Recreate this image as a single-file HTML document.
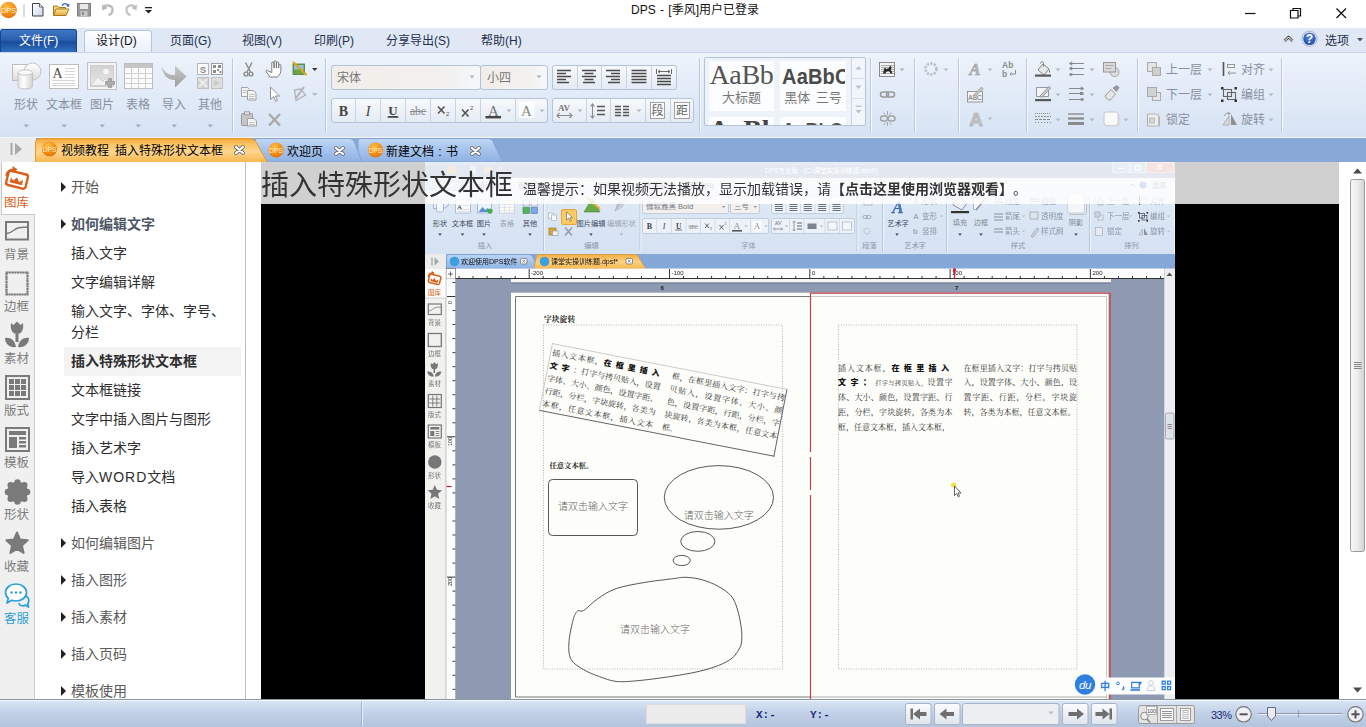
<!DOCTYPE html>
<html lang="zh-CN">
<head>
<meta charset="utf-8">
<title>DPS - [季风]用户已登录</title>
<style>
*{box-sizing:border-box;margin:0;padding:0}
html,body{width:1366px;height:727px;overflow:hidden;background:#fff}
body{font-family:"Liberation Sans","Noto Sans CJK SC",sans-serif;font-size:13px;color:#222;position:relative}
.abs{position:absolute}
#titlebar{position:absolute;left:0;top:0;width:1366px;height:28px;background:#fff}
#title{position:absolute;left:0;width:1390px;top:0.500px;text-align:center;font-size:12px;word-spacing:1px;color:#111;line-height:18px}
#menubar{position:absolute;left:0;top:28px;width:1366px;height:24px;background:#e0e8f5}
#menubar .m{position:absolute;top:4px;font-size:12px;line-height:18px;color:#1e2f4d;white-space:nowrap}
#filetab{position:absolute;left:0;top:1px;width:77px;height:23px;border-radius:3px 3px 0 0;background:linear-gradient(#3f78c4,#2a5fb0 45%,#1b4c9c 55%,#2f6fc0);border:1px solid #1a4488;border-bottom:none}
#designtab{position:absolute;left:84px;top:2px;width:68px;height:23px;border-radius:4px 4px 0 0;background:linear-gradient(#fdfeff,#e9f0fa);border:1px solid #b4c6df;border-bottom:none}
#ribbon{position:absolute;left:0;top:52px;width:1366px;height:86px;border-bottom:1px solid #f2f6fb;background:linear-gradient(#edf3fb,#e3ecf8 40%,#d7e3f4);border-top:1px solid #c9d6ea}
#tabbar{position:absolute;left:0;top:138px;width:1366px;height:24px;background:#88a9d7}
#leftstrip{position:absolute;left:0;top:162px;width:35px;height:537px;background:#f0f0f0;border-right:1px solid #c9c9c9}
#panel{position:absolute;left:35px;top:162px;width:211px;height:537px;background:#fff;border-right:1px solid #bdbdbd}
#video{position:absolute;left:261px;top:162px;width:1078px;height:537px;background:#000;overflow:hidden}
#vscroll{position:absolute;left:1350px;top:162px;width:16px;height:537px;background:#fff}
#status{position:absolute;left:0;top:699px;width:1366px;height:28px;background:linear-gradient(#dbe6f5,#c3d2e8 45%,#b3c4dc);border-top:1px solid #8797ab}

.rl{position:absolute;font-size:12px;line-height:16px;color:#8790a0;white-space:nowrap;text-align:center}
.sep{position:absolute;top:58px;width:2px;height:75px;border-left:1px solid #b9c9e0;border-right:1px solid #f6f9fd}
.box{position:absolute;border:1px solid #b3c3da;border-radius:3px;background:linear-gradient(#f7f9fc,#e4ebf5)}
.bt{position:absolute;font-size:12px;line-height:16px;color:#777;white-space:nowrap}
.tabt{font-size:12px;line-height:16px;color:#000;white-space:nowrap;font-family:"Liberation Sans","Noto Sans CJK SC",sans-serif}
.sl{position:absolute;left:0;width:33px;text-align:center;font-size:12.500px;line-height:16px;white-space:nowrap}
.ni{position:absolute;left:36px;font-size:14px;line-height:20px;white-space:nowrap}
#panel{overflow:hidden}

.pt{position:absolute;font-family:"Liberation Serif","Noto Serif CJK SC",serif;font-size:8px;color:#333;white-space:nowrap}
.pt .l{display:block;text-align:justify;text-align-last:justify;white-space:nowrap}
.pt b{font-family:"Liberation Sans","Noto Sans CJK SC",sans-serif;font-weight:900;color:#111}
.pt small{font-size:6px}
#vhead{position:absolute;left:0;top:0;width:1078px;height:42px;background:rgba(255,255,255,0.815)}
#vh1{position:absolute;left:0;top:6px;font-size:28px;line-height:36px;color:#333;white-space:nowrap;letter-spacing:0}
#vh2{position:absolute;left:262px;top:17px;text-spacing-trim:space-all;font-size:14px;line-height:20px;color:#333;white-space:nowrap}
.stx{position:absolute;top:7px;font-family:"Liberation Mono","DejaVu Sans Mono",monospace;font-size:11px;line-height:16px;font-weight:bold;color:#1a2a7a;white-space:nowrap}
</style>
</head>
<body>
<div id="titlebar">

  <svg class="abs" style="left:0;top:0" width="160" height="28" viewBox="0 0 160 28">
    <defs>
      <radialGradient id="gDps" cx="0.4" cy="0.3" r="0.8"><stop offset="0" stop-color="#ffc24a"/><stop offset="0.6" stop-color="#f28a12"/><stop offset="1" stop-color="#dd6a05"/></radialGradient>
      <linearGradient id="gFold" x1="0" y1="0" x2="0" y2="1"><stop offset="0" stop-color="#fbe7a0"/><stop offset="1" stop-color="#e3aa3a"/></linearGradient>
      <linearGradient id="gDoc" x1="0" y1="0" x2="1" y2="1"><stop offset="0" stop-color="#ffffff"/><stop offset="1" stop-color="#cfd8e6"/></linearGradient>
    </defs>
    <circle cx="8.5" cy="10" r="8.3" fill="url(#gDps)"/>
    <text x="8.6" y="13" font-size="7.5" fill="#fff3d8" text-anchor="middle" font-family="Liberation Sans, sans-serif">DPS</text>
    <rect x="23.5" y="4" width="1" height="13" fill="#b8b8b8"/>
    <path d="M32.5 3.5h7l3.5 3.5v9h-10.5z" fill="url(#gDoc)" stroke="#3c4350" stroke-width="1"/>
    <path d="M39.5 3.5v3.5h3.5" fill="#e8edf5" stroke="#3c4350" stroke-width="0.8"/>
    <path d="M53.5 15.5v-9.5h4l1.5 1.5h6.5v2" fill="#f3d27a" stroke="#a97a1e" stroke-width="1"/>
    <path d="M53.5 15.500l2.500-6.500h13l-3 6.500z" fill="url(#gFold)" stroke="#a97a1e" stroke-width="1"/>
    <path d="M62 5.500c2-2.500 5-2.500 6 0" fill="none" stroke="#3a63b8" stroke-width="1.300"/>
    <path d="M69.500 3.500l-0.500 3.500-3-1z" fill="#3a63b8"/>
    <rect x="77.500" y="3.500" width="13" height="12.500" fill="#9a9a9a" stroke="#7d7d7d"/>
    <rect x="80" y="4" width="8" height="5" fill="#e9e9e9"/>
    <rect x="80.500" y="11" width="7" height="5" fill="#c9c9c9"/>
    <rect x="82" y="12" width="2" height="3" fill="#8a8a8a"/>
    <path d="M104 6.500c5-2.500 9 0 8.500 4-0.300 2.500-2 4-4 4.500" fill="none" stroke="#b9b9b9" stroke-width="2.200"/>
    <path d="M102 4.500l0.500 6 5-2.500z" fill="#b4b4b4"/>
    <path d="M135 6.500c-5-2.500-9 0-8.500 4 0.300 2.500 2 4 4 4.500" fill="none" stroke="#c4c4c4" stroke-width="2.200"/>
    <path d="M137 4.500l-0.500 6-5-2.500z" fill="#bfbfbf"/>
    <rect x="145" y="7" width="7" height="1.300" fill="#222"/>
    <path d="M145 10h7l-3.500 3.500z" fill="#222"/>
  </svg>
  <svg class="abs" style="left:1236px;top:0" width="130" height="28" viewBox="0 0 130 28">
    <path d="M9 13.500h10.500" stroke="#111" stroke-width="1.200"/>
    <path d="M54.500 10.500h7.500v7.500h-7.500z M57 10.500v-2h7.500v7.500h-2.500" fill="none" stroke="#111" stroke-width="1.200"/>
    <path d="M100.500 8.500l9.500 9.500M110 8.500l-9.500 9.500" stroke="#111" stroke-width="1.300"/>
  </svg>
  <div id="title">DPS - [季风]用户已登录</div>
</div>
<div id="menubar">
  <div id="filetab"></div>
  <div id="designtab"></div>
  <div class="m" style="left:19px;color:#fff">文件(F)</div>
  <div class="m" style="left:96px;color:#111">设计(D)</div>
  <div class="m" style="left:170px">页面(G)</div>
  <div class="m" style="left:242px">视图(V)</div>
  <div class="m" style="left:314px">印刷(P)</div>
  <div class="m" style="left:386px">分享导出(S)</div>
  <div class="m" style="left:481px">帮助(H)</div>
  <div class="m" style="left:1325px;color:#1e2f4d">选项</div>
  <svg class="abs" style="left:1276px;top:0" width="90" height="24" viewBox="0 0 90 24">
    <defs><radialGradient id="gHelp" cx="0.5" cy="0.3" r="0.8"><stop offset="0" stop-color="#5b8be0"/><stop offset="1" stop-color="#173f9c"/></radialGradient></defs>
    <path d="M8.500 13l4-4 4 4" fill="none" stroke="#555" stroke-width="2.600" stroke-linejoin="round"/>
    <path d="M8.500 13l4-4 4 4" fill="none" stroke="#fff" stroke-width="1" stroke-linejoin="round"/>
    <circle cx="33.500" cy="10.800" r="7.600" fill="#eef2f9" stroke="#8b9fc4" stroke-width="0.800"/>
    <circle cx="33.500" cy="10.800" r="6.300" fill="url(#gHelp)"/>
    <text x="33.500" y="15.200" font-size="12" font-weight="bold" fill="#fff" text-anchor="middle" font-family="Liberation Sans, sans-serif">?</text>
    <path d="M81 10h6l-3 3.500z" fill="#4a5566"/>
  </svg>

</div>
<div id="ribbon"></div>
<div id="ribbonc">
  <div class="rl" style="left:8px;top:97px;width:36px">形状</div>
  <div class="rl" style="left:44px;top:97px;width:40px">文本框</div>
  <div class="rl" style="left:84px;top:97px;width:36px">图片</div>
  <div class="rl" style="left:120px;top:97px;width:36px">表格</div>
  <div class="rl" style="left:156px;top:97px;width:36px">导入</div>
  <div class="rl" style="left:192px;top:97px;width:36px">其他</div>
  <div class="sep" style="left:232px"></div>
  <div class="sep" style="left:325px"></div>
  <div class="sep" style="left:699px"></div>
  <div class="sep" style="left:870px"></div>
  <div class="sep" style="left:914px"></div>
  <div class="sep" style="left:958px"></div>
  <div class="sep" style="left:1026px"></div>
  <div class="sep" style="left:1137px"></div>
  <div class="sep" style="left:1281px"></div>
  <div class="box" style="left:331px;top:65px;width:150px;height:25px;background:linear-gradient(90deg,#f1ede9,#f3f1ef 80%,#f4f7fb)"></div>
  <div class="box" style="left:480px;top:65px;width:68px;height:25px;background:linear-gradient(90deg,#f1ede9,#f3f1ef 70%,#f4f7fb)"></div>
  <div class="bt" style="left:337px;top:70px">宋体</div>
  <div class="bt" style="left:487px;top:70px">小四</div>
  <div class="box" style="left:552px;top:65px;width:125px;height:25px"></div>
  <div class="box" style="left:331px;top:98px;width:217px;height:25px"></div>
  <div class="box" style="left:552px;top:98px;width:142px;height:25px"></div>
  <div class="box" style="left:704px;top:57px;width:162px;height:69px;border-radius:2px;background:#eef3fa;overflow:hidden">
    <div class="abs" style="left:4px;top:3px;width:65px;height:50px;background:#fcfdfe"></div>
    <div class="abs" style="left:75px;top:3px;width:66px;height:50px;background:#fcfdfe"></div>
    <div class="abs" style="left:4px;top:0px;width:65px;text-align:center;font-family:'Liberation Serif','Noto Serif CJK SC',serif;font-size:28px;line-height:34px;color:#555;letter-spacing:-0.3px">AaBb</div>
    <div class="abs" style="left:4px;top:32px;width:65px;text-align:center;font-size:13px;line-height:16px;color:#777">大标题</div>
    <div class="abs" style="left:77px;top:2px;width:63px;overflow:hidden;white-space:nowrap;font-family:'Liberation Sans','Noto Sans CJK SC',sans-serif;font-weight:bold;font-size:20px;line-height:32px;color:#4a4a4a;letter-spacing:0.2px;transform:scaleY(1.12);transform-origin:0 50%">AaBbCc</div>
    <div class="abs" style="left:75px;top:32px;width:66px;text-align:center;font-size:13px;line-height:16px;color:#777;word-spacing:2px">黑体 三号</div>
    <div class="abs" style="left:4px;top:59px;width:65px;height:10px;background:#fcfdfe"></div>
    <div class="abs" style="left:75px;top:59px;width:66px;height:10px;background:#fcfdfe"></div>
    <div class="abs" style="left:4px;top:55px;width:65px;text-align:center;font-family:'Liberation Serif',serif;font-weight:bold;font-size:28px;line-height:34px;color:#444">AaBb</div>
    <div class="abs" style="left:77px;top:58.500px;width:63px;overflow:hidden;white-space:nowrap;font-weight:bold;font-size:18px;line-height:26px;color:#555;letter-spacing:0.2px">AaBbCcDd</div>
    <div class="abs" style="left:146px;top:0;width:15px;height:67px;background:#f2f6fb;border-left:1px solid #c9d5e6"></div>
  </div>
  <div class="rl" style="left:1166px;top:62px;text-align:left">上一层</div>
  <div class="rl" style="left:1166px;top:87px;text-align:left">下一层</div>
  <div class="rl" style="left:1166px;top:112px;text-align:left">锁定</div>
  <div class="rl" style="left:1241px;top:62px;text-align:left">对齐</div>
  <div class="rl" style="left:1241px;top:87px;text-align:left">编组</div>
  <div class="rl" style="left:1241px;top:112px;text-align:left">旋转</div>
  <svg class="abs" style="left:0;top:52px" width="1366" height="85" viewBox="0 52 1366 85" id="ribsvg">
  <defs>
  <linearGradient id="gW" x1="0" y1="0" x2="0" y2="1"><stop offset="0" stop-color="#ffffff"/><stop offset="1" stop-color="#dcdcdc"/></linearGradient>
  <linearGradient id="gCyl" x1="0" y1="0" x2="1" y2="0"><stop offset="0" stop-color="#e2e2e2"/><stop offset="0.4" stop-color="#ffffff"/><stop offset="1" stop-color="#d2d2d2"/></linearGradient>
  <linearGradient id="gGr" x1="0" y1="0" x2="0" y2="1"><stop offset="0" stop-color="#c9c9c9"/><stop offset="1" stop-color="#9d9d9d"/></linearGradient>
  <linearGradient id="gPic" x1="0" y1="0" x2="0" y2="1"><stop offset="0" stop-color="#d2d2d2"/><stop offset="1" stop-color="#e9e9e9"/></linearGradient>
</defs>
<!-- dropdown arrows under big buttons -->
<g fill="#a3abba">
  <path d="M23.500 124.500h5.500l-2.750 3z"/><path d="M61.500 124.500h5.500l-2.750 3z"/><path d="M99.500 124.500h5.500l-2.750 3z"/>
  <path d="M135.500 124.500h5.500l-2.750 3z"/><path d="M171.500 124.500h5.500l-2.750 3z"/><path d="M207.500 124.500h5.500l-2.750 3z"/>
</g>
<!-- shapes icon -->
<rect x="12.500" y="64.500" width="16" height="16" fill="url(#gW)" stroke="#bdbdbd"/>
<circle cx="32.500" cy="71.500" r="8.500" fill="url(#gW)" stroke="#c2c2c2"/>
<path d="M18 72.500v14c0 3.200 14.500 3.200 14.500 0v-14z" fill="url(#gCyl)" stroke="#c4c4c4"/>
<ellipse cx="25.250" cy="72.500" rx="7.250" ry="2.600" fill="#fafafa" stroke="#c8c8c8"/>
<!-- textbox icon -->
<rect x="49.500" y="64.500" width="29" height="24" fill="#fdfdfd" stroke="#bcbcbc"/>
<text x="52.500" y="78" font-family="Liberation Serif, serif" font-size="14" fill="#4c4c4c">A</text>
<g stroke="#d6d6d6" stroke-width="1"><path d="M65 68.500h10M65 71.500h10M65 74.500h10M65 77.500h10M52 80.500h23M52 83.500h23M52 85.500h23"/></g>
<!-- picture icon -->
<rect x="87.500" y="62.500" width="29" height="27" fill="#f4f4f4" stroke="#c2c2c2"/>
<rect x="90.500" y="65.500" width="23" height="21" fill="url(#gPic)" stroke="#cdcdcd"/>
<circle cx="106" cy="71.500" r="2.800" fill="#f6f6f6"/>
<path d="M91 85.500l7-9 4.500 5 3-3 5 7z" fill="#f1f1f1" stroke="#bdbdbd" stroke-width="0.600"/>
<path d="M108.500 78.500h3v3h3v3h-3v3h-3v-3h-3v-3h3z" fill="#adadad" stroke="#8d8d8d" stroke-width="0.700"/>
<!-- table icon -->
<rect x="124.500" y="63.500" width="28" height="25" fill="#fcfcfc" stroke="#bdbdbd"/>
<rect x="125" y="64" width="27" height="4" fill="#c6c6c6"/>
<g stroke="#cfcfcf" stroke-width="1"><path d="M131.500 68v20M138.500 68v20M145.500 68v20M125 73.500h27M125 78.500h27M125 83.500h27"/></g>
<!-- import arrow -->
<path d="M161.500 66c2 6 8 9.500 13.500 9v-9.500l11.500 11-11.500 11v-7.500c-7 0.500-12.500-5-13.500-14z" fill="url(#gGr)"/>
<!-- others icon -->
<rect x="197.500" y="63.500" width="11" height="11" fill="#fafafa" stroke="#b5b5b5"/>
<text x="203" y="73" font-size="9" font-family="Liberation Sans, sans-serif" font-weight="bold" fill="#8a8a8a" text-anchor="middle">S</text>
<rect x="211.500" y="63.500" width="11" height="11" fill="#fcfcfc" stroke="#9e9e9e"/>
<g fill="#8d8d8d"><rect x="213" y="65" width="3" height="3"/><rect x="218" y="65" width="3" height="3"/><rect x="213" y="70" width="3" height="3"/><rect x="217" y="69" width="2" height="2"/><rect x="219.500" y="71" width="2" height="2"/></g>
<rect x="197.500" y="77.500" width="11" height="11" fill="#d2d2d2" stroke="#bdbdbd"/>
<path d="M199 79l8 8M207 79l-8 8" stroke="#ececec" stroke-width="2.200"/>
<rect x="211.500" y="77.500" width="11" height="11" fill="#dedede" stroke="#c2c2c2"/>
<path d="M214 80l6 3-6 3z" fill="#c8c8c8"/>
<!-- scissors -->
<g stroke="#8b8b8b" stroke-width="1.400" fill="none"><path d="M245.500 62.500l5 9.500M252 62.500l-5 9.500"/><circle cx="246" cy="74" r="1.900"/><circle cx="251" cy="74" r="1.900"/></g>
<!-- hand -->
<path d="M268 71c-1.200-1.600-2.600-0.600-1.600 1l3.400 5h7.500c2.500-2 3.600-4.500 3.600-7v-4.500c0-1.500-2.200-1.500-2.200 0v2.500v-5c0-1.500-2.300-1.500-2.300 0v5v-6c0-1.500-2.300-1.500-2.300 0v6v-5c0-1.500-2.300-1.500-2.300 0v9.500z" fill="#fff" stroke="#6f6f6f" stroke-width="0.900" stroke-linejoin="round"/>
<!-- picture edit -->
<rect x="293" y="64" width="11.500" height="10.500" fill="#6aa54a" stroke="#4f7b3c" stroke-width="0.800"/>
<rect x="294" y="65" width="9.500" height="4.500" fill="#8fc0ea"/>
<path d="M293 62l13.500 13" stroke="#d9a520" stroke-width="2.400"/>
<path d="M312 68h5.500l-2.750 3z" fill="#333"/>
<!-- copy -->
<g fill="#f3f3f3" stroke="#9a9a9a" stroke-width="0.900"><path d="M241.500 87.500h6l2 2v7h-8z"/><path d="M247.500 90.500h6l2.500 2.500v7h-8.500z"/></g>
<g stroke="#b5b5b5" stroke-width="0.800"><path d="M249 94.500h5.500M249 96.500h5.500M249 98.500h5.500M243 90.500h3.500M243 92.500h3.500"/></g>
<!-- pointer -->
<path d="M270.500 87v12.500l3-2.800 2 4.600 1.900-0.800-2-4.500h4.100z" fill="#fff" stroke="#8a8a8a" stroke-width="0.900" stroke-linejoin="round"/>
<!-- edit shape -->
<g stroke="#b3b3b3" stroke-width="1.300" fill="none"><path d="M294.500 90l1.500 10.500 9.500-5.500-5-6z"/><path d="M304 87l-8 11" stroke-width="2"/></g>
<path d="M312 93h5.500l-2.750 3z" fill="#b5bcc8"/>
<!-- paste -->
<rect x="241.500" y="113.500" width="11" height="12" rx="1" fill="#c6c6c6" stroke="#909090" stroke-width="0.900"/>
<rect x="244.500" y="111.800" width="5" height="3" fill="#e4e4e4" stroke="#909090" stroke-width="0.800"/>
<path d="M247.500 118.500h6.500l2.500 2.500v5h-9z" fill="#f3f3f3" stroke="#9a9a9a" stroke-width="0.900"/>
<path d="M249 122.500h6M249 124.500h6" stroke="#b8b8b8" stroke-width="0.800"/>
<!-- delete X -->
<path d="M269 114l11 11.500M280 114l-11 11.500" stroke="#a8a8a8" stroke-width="2.400"/>

<!-- combobox arrows -->
<g fill="#a9b1bf"><path d="M469.500 75.500h5l-2.500 2.800z"/><path d="M536.500 75.500h5l-2.500 2.800z"/></g>
<path d="M480.500 66v23" stroke="#b3c3da"/>
<!-- align group dividers -->
<g stroke="#c7d3e5" stroke-width="1"><path d="M577.500 66v23M601.500 66v23M626.500 66v23M651.500 66v23"/>
<path d="M355.500 99v23M380.500 99v23M405.500 99v23M430.500 99v23M455.500 99v23M480.500 99v23M515.500 99v23"/>
<path d="M586.500 99v23M610.500 99v23M645.500 99v23M670.500 99v23"/></g>
<!-- align icons -->
<g stroke="#4a4a4a" stroke-width="1.300">
 <path d="M557 70.500h14M557 73.500h9M557 76.500h14M557 79.500h9M557 82.500h12"/>
 <path d="M582 70.500h14M584.500 73.500h9M582 76.500h14M584.500 79.500h9M583 82.500h12"/>
 <path d="M606 70.500h14M611 73.500h9M606 76.500h14M611 79.500h9M608 82.500h12"/>
 <path d="M631.500 70.500h15M631.500 73.500h15M631.500 76.500h15M631.500 79.500h15M631.500 82.500h15"/>
 <path d="M657 75.500h14M657 78.500h14M657 81.500h14M657 84.500h14"/>
</g>
<g stroke="#6a6a6a" stroke-width="1" fill="none"><path d="M656.500 69v5M671.500 69v5M658 71.500h12M660 70l-2 1.500 2 1.500M668 70l2 1.500-2 1.500"/></g>
<!-- B I U abc x2 x2 A A -->
<g font-family="Liberation Serif, serif" fill="#444">
 <text x="343.500" y="116" font-size="14" font-weight="bold" text-anchor="middle">B</text>
 <text x="368" y="116" font-size="14" font-style="italic" text-anchor="middle">I</text>
 <text x="393" y="115" font-size="13" font-weight="bold" text-anchor="middle" text-decoration="underline">U</text>
 <text x="418" y="115" font-size="11.500" text-anchor="middle" fill="#8a8a8a">abc</text>
 <text x="493.500" y="116" font-size="15" text-anchor="middle" fill="#7a7a7a">A</text>
 <text x="526.500" y="116" font-size="15" text-anchor="middle" fill="#8a8a8a">A</text>
</g>
<rect x="387.500" y="116.500" width="11" height="1.200" fill="#444"/>
<path d="M410 111.500h16.500" stroke="#8a8a8a" stroke-width="1"/>
<g stroke="#555" stroke-width="1.600"><path d="M438 106.500l6.500 7M444.500 106.500l-6.500 7"/><path d="M462 109.500l6.500 7M468.500 109.500l-6.500 7"/></g>
<text x="446" y="116" font-size="6" fill="#555" font-family="Liberation Sans, sans-serif">2</text>
<text x="470" y="110" font-size="6" fill="#555" font-family="Liberation Sans, sans-serif">2</text>
<rect x="485.500" y="116" width="15.500" height="2.400" fill="#444"/>
<rect x="519" y="102" width="15.500" height="16" fill="#fff" opacity="0.85"/>
<text x="526.500" y="116" font-size="15" text-anchor="middle" fill="#8a8a8a" font-family="Liberation Serif, serif">A</text>
<g fill="#b2b9c6"><path d="M506.500 109.500h5l-2.500 2.800z"/><path d="M539.500 109.500h5l-2.500 2.800z"/><path d="M577.500 109.500h5l-2.500 2.800z"/><path d="M636.500 109.500h5l-2.500 2.800z"/></g>
<!-- AV -->
<text x="564" y="110.500" font-size="9" font-weight="bold" text-anchor="middle" fill="#777" font-family="Liberation Serif, serif">AV</text>
<g stroke="#8a8a8a" stroke-width="1.100" fill="none"><path d="M557 115.500h15M559.500 113l-2.500 2.500 2.500 2.500M569.500 113l2.500 2.500-2.500 2.500"/></g>
<!-- line spacing -->
<g stroke="#8a8a8a" stroke-width="1.100" fill="none"><path d="M592.500 104v14M590.500 106.500l2-2.500 2 2.500M590.500 115.500l2 2.500 2-2.500"/></g>
<g stroke="#555" stroke-width="1.300"><path d="M597 106.500h8M597 110.500h8M597 114.500h8"/></g>
<!-- columns -->
<g stroke="#555" stroke-width="1.300"><path d="M615 106.500h6M615 109.500h6M615 112.500h6M615 115.500h6M623 106.500h6M623 109.500h6M623 112.500h6M623 115.500h6"/></g>
<!-- duan / ju -->
<rect x="650.500" y="102.500" width="14" height="16" fill="#fafbfd" stroke="#9a9a9a" stroke-width="0.900"/>
<rect x="674.500" y="102.500" width="15" height="16" fill="#fafbfd" stroke="#9a9a9a" stroke-width="0.900"/>
<text x="657.500" y="115" font-size="12" text-anchor="middle" fill="#666" font-family="Noto Sans CJK SC, sans-serif">段</text>
<text x="682" y="115" font-size="12" text-anchor="middle" fill="#666" font-family="Noto Sans CJK SC, sans-serif">距</text>
<!-- gallery scroll -->
<g fill="#b7bfcc"><path d="M855.500 69.500h6l-3-3.500z"/><path d="M855.500 85.500h6l-3 3.500z"/><path d="M855.500 110h6l-3 3.500z"/><rect x="855.500" y="105.500" width="6" height="1.300"/></g>
<path d="M852.500 78.500h13M852.500 98.500h13" stroke="#d5deeb"/>

<!-- text wrap icon -->
<rect x="879.500" y="62.500" width="15" height="14" fill="#f4f4f4" stroke="#808080" stroke-width="0.900"/>
<g stroke="#9a9a9a" stroke-width="0.800"><path d="M881 65.500h13M881 67.500h13M881 69.500h13M881 71.500h13M881 73.500h13"/></g>
<path d="M883 73.500l1.500-6 2 1.500 2.500-1 1-2.500 1.500 1.500-0.500 3 1.500 3.500h-2l-1.500-2.500-2.500 0.500-1 2z" fill="#2a2a2a"/>
<path d="M899.500 68.500h5l-2.500 2.800z" fill="#a9b1bf"/>
<!-- link -->
<g fill="none" stroke="#9a9a9a" stroke-width="1.500"><rect x="880.500" y="92" width="8" height="5" rx="2.500"/><rect x="886.500" y="92" width="8" height="5" rx="2.500"/></g>
<!-- broken link -->
<g fill="none" stroke="#a2a2a2" stroke-width="1.400"><rect x="880.500" y="116" width="7" height="5" rx="2.500"/><rect x="888" y="116" width="7" height="5" rx="2.500"/><path d="M887.500 111v4M887.500 122v4M883.500 112.500l2 2.500M891.500 112.500l-2 2.500M883.500 125l2-2.500M891.500 125l-2-2.500" stroke-width="0.900"/></g>
<!-- gear -->
<circle cx="931" cy="69" r="5.500" fill="none" stroke="#b9bec7" stroke-width="2.600" stroke-dasharray="2.200 1.300"/>
<path d="M943.500 68.500h5l-2.500 2.800z" fill="#b5bcc8"/>
<!-- art text A -->
<text x="975" y="75" font-size="17" font-style="italic" font-weight="bold" text-anchor="middle" fill="#b8b8b8" stroke="#8f8f8f" stroke-width="0.400" font-family="Liberation Serif, serif">A</text>
<path d="M987.500 68.500h5l-2.500 2.800z" fill="#b5bcc8"/>
<text x="1002" y="68" font-size="8.500" font-weight="bold" fill="#8d8d8d" font-family="Liberation Sans, sans-serif">Ab</text>
<text x="1002" y="76.500" font-size="8.500" font-weight="bold" fill="#8d8d8d" font-family="Liberation Sans, sans-serif">b</text>
<path d="M1015.500 70v4h-5.500M1011.500 72.500l-1.500 1.500 1.500 1.500" fill="none" stroke="#8d8d8d" stroke-width="1"/>
<!-- ABC edit -->
<rect x="967.500" y="91.500" width="15" height="10.500" fill="#f4f4f4" stroke="#8f8f8f" stroke-width="0.900"/>
<text x="975" y="100" font-size="6.500" text-anchor="middle" fill="#666" font-family="Liberation Sans, sans-serif">ABC</text>
<path d="M974 94.500l7.500-7.500 1.700 1.700-7.500 7.500z" fill="#c6c6c6" stroke="#909090" stroke-width="0.600"/>
<!-- 3D A -->
<text x="976" y="125.500" font-size="19" font-weight="bold" text-anchor="middle" fill="#c6c6c6" stroke="#9b9b9b" stroke-width="0.500" font-family="Liberation Sans, sans-serif">A</text>
<path d="M987.500 117.500h5l-2.500 2.800z" fill="#b5bcc8"/>
<!-- fill bucket -->
<path d="M1038 70l5-6 6 5-5 6z" fill="#e9e9e9" stroke="#777" stroke-width="0.900"/>
<path d="M1040.500 63.500c0-2.500 3-2.500 3 0v3" fill="none" stroke="#777" stroke-width="0.900"/>
<path d="M1049 69c1 2 1.500 3 0.700 4-0.800-1-0.900-2-0.700-4z" fill="#777"/>
<rect x="1035" y="74.500" width="16" height="2.200" fill="#5a5a5a"/>
<!-- pen -->
<path d="M1036.500 87.500h12v9h-12z" fill="#f0f3f8" stroke="#8d8d8d" stroke-width="0.900"/>
<path d="M1040 96l9-9.500 1.600 1.600-9 9.500z" fill="#cfcfcf" stroke="#777" stroke-width="0.700"/>
<rect x="1035" y="99" width="16" height="2.200" fill="#5a5a5a"/>
<!-- dotted lines -->
<g stroke="#8a8a8a" stroke-width="1"><path d="M1035 113.500h16" stroke-dasharray="1 1"/><path d="M1035 116.500h16" stroke-dasharray="2 1"/><path d="M1035 119.500h16" stroke-dasharray="3 1"/><path d="M1035 122.500h16" stroke-dasharray="1 2"/></g>
<!-- arrows icons -->
<g stroke="#8a8a8a" stroke-width="1" fill="#8a8a8a"><path d="M1071 63.500h13M1071 68.500h13M1071 74.500h13"/><path d="M1069 63.500l3-1.700v3.400zM1069 68.500l3-1.700v3.400z" stroke-width="0.500"/><path d="M1069 74.500l2-1.400 2 1.400-2 1.400z" stroke-width="0.500"/></g>
<g stroke="#8a8a8a" stroke-width="1" fill="#8a8a8a"><path d="M1069 88.500h13M1069 93.500h13M1069 99.500h13"/><path d="M1084 88.500l-3-1.700v3.400z" stroke-width="0.500"/><rect x="1080" y="92" width="3.500" height="3" stroke="none"/><path d="M1084 99.500l-2-1.400-2 1.400 2 1.400z" stroke-width="0.500"/></g>
<g stroke="#8a8a8a"><path d="M1068 114h16" stroke-width="1.400"/><path d="M1068 118.500h16" stroke-width="2.200"/><path d="M1068 123.500h16" stroke-width="3"/></g>
<g fill="#b0b8c5"><path d="M1055.500 68.500h5l-2.500 2.800z"/><path d="M1055.500 93.500h5l-2.500 2.800z"/><path d="M1055.500 118.500h5l-2.500 2.800z"/><path d="M1089.500 68.500h5l-2.500 2.800z"/><path d="M1089.500 93.500h5l-2.500 2.800z"/><path d="M1089.500 118.500h5l-2.500 2.800z"/><path d="M1123.500 118.500h5l-2.500 2.800z"/></g>
<!-- shadow icon -->
<circle cx="1114.500" cy="72" r="4.500" fill="#dedede" stroke="#9a9a9a" stroke-width="0.900"/>
<rect x="1103.500" y="62.500" width="12" height="9.500" fill="#d9d9d9" stroke="#8f8f8f" stroke-width="0.900"/>
<path d="M1105.500 65.500h8M1105.500 68.500h6" stroke="#a9a9a9" stroke-width="1"/>
<!-- brush -->
<path d="M1113 88l4-2.500 2 2-2.500 4z" fill="#9a9a9a" stroke="#777" stroke-width="0.600"/>
<path d="M1105 96l6-6.500 4.500 4.500-5 6c-2 0.500-4.500-1.500-5.500-4z" fill="#e6e6e6" stroke="#888" stroke-width="0.800"/>
<!-- white rounded rect -->
<rect x="1104" y="112" width="14" height="13.500" rx="2.500" fill="#f9f9f9" stroke="#c4c4c4" stroke-width="0.900"/>
<path d="M1106 126h11c1.200 0 2-0.800 2-2v-10" fill="none" stroke="#cfd3da" stroke-width="1"/>
<!-- layer icons -->
<g stroke="#a5a5a5" stroke-width="0.900"><rect x="1147.500" y="62.500" width="9" height="9" fill="#e4e4e4"/><rect x="1152.500" y="67.500" width="8" height="8" fill="#cfcfcf"/></g>
<g stroke="#a5a5a5" stroke-width="0.900"><rect x="1152.500" y="92.500" width="8" height="8" fill="#e6e6e6"/><rect x="1147.500" y="87.500" width="9" height="9" fill="#d2d2d2"/></g>
<path d="M1147.500 114h9l3 3v9h-12z" fill="#eeeeee" stroke="#a9a9a9" stroke-width="0.900"/>
<rect x="1149.500" y="118" width="5" height="5" fill="#d5d5d5" stroke="#a9a9a9" stroke-width="0.700"/>
<path d="M1158.500 113.500v12" stroke="#c2c2c2"/>
<g fill="#b0b8c5"><path d="M1207.500 68.500h5l-2.500 2.800z"/><path d="M1207.500 93.500h5l-2.500 2.800z"/><path d="M1268.500 68.500h5l-2.500 2.800z"/><path d="M1268.500 93.500h5l-2.500 2.800z"/><path d="M1268.500 118.500h5l-2.500 2.800z"/></g>
<!-- align icon -->
<path d="M1223.500 62v14" stroke="#555" stroke-width="1.600"/>
<rect x="1227.500" y="64.500" width="7" height="3" fill="#f3f3f3" stroke="#8a8a8a" stroke-width="0.900"/>
<path d="M1236 73h-8M1230 71l-2 2 2 2" fill="none" stroke="#8a8a8a" stroke-width="0.900"/>
<!-- group icon -->
<g fill="none" stroke="#666" stroke-width="1.100"><rect x="1223.500" y="89.500" width="8" height="7"/><rect x="1227.500" y="92.500" width="8" height="7"/></g>
<g fill="#333"><rect x="1221" y="87" width="2.500" height="2.500"/><rect x="1234.500" y="87" width="2.500" height="2.500"/><rect x="1221" y="99.500" width="2.500" height="2.500"/><rect x="1234.500" y="99.500" width="2.500" height="2.500"/></g>
<!-- rotate icon -->
<path d="M1229 125v-9l-6 9z" fill="#dcdcdc" stroke="#a3a3a3" stroke-width="0.800"/>
<path d="M1231 125v-11l6 11z" fill="#8f8f8f"/>
<path d="M1224.500 116c0.500-2.500 3-3.500 5-2.500M1228.500 112l1.500 1.500-2 1.500" fill="none" stroke="#8f8f8f" stroke-width="1"/>


  </svg>
</div>

<div id="tabbar"></div>
<svg class="abs" style="left:0;top:137px" width="520" height="25" viewBox="0 137 520 25">
  <defs>
    <linearGradient id="gTabA" x1="0" y1="0" x2="0" y2="1"><stop offset="0" stop-color="#f5a536"/><stop offset="0.25" stop-color="#fbc468"/><stop offset="0.55" stop-color="#fdd690"/><stop offset="1" stop-color="#f9b549"/></linearGradient>
    <linearGradient id="gTabI" x1="0" y1="0" x2="0" y2="1"><stop offset="0" stop-color="#c3d8f4"/><stop offset="0.4" stop-color="#a9c6ee"/><stop offset="1" stop-color="#8fb2e2"/></linearGradient>
    <radialGradient id="gDps2" cx="0.4" cy="0.3" r="0.8"><stop offset="0" stop-color="#ffc24a"/><stop offset="0.6" stop-color="#f28a12"/><stop offset="1" stop-color="#dd6a05"/></radialGradient>
  </defs>
  <rect x="0" y="138" width="36" height="24" fill="#ececec"/>
  <path d="M11.500 143v12" stroke="#a9a9a9" stroke-width="2"/>
  <path d="M15 143l7 6-7 6z" fill="#a9a9a9"/>
  <path d="M358 162V141c0-1.500 1-2.500 3-2.500h127c4 0 5.500 3 7 7.500l8 16z" fill="url(#gTabI)" stroke="#7fa2d4" stroke-width="1"/>
  <path d="M255 162V141c0-1.500 1-2.500 3-2.500h91c4 0 5.500 3 7 7.500l6 16z" fill="url(#gTabI)" stroke="#7fa2d4" stroke-width="1"/>
  <path d="M35.500 162.500V143c0-3 2-4.500 5-4.500h209c5 0 7 3.500 9.500 9l8.500 15z" fill="url(#gTabA)" stroke="#e09a2c" stroke-width="1"/>
  <g font-family="Liberation Sans, sans-serif" font-size="6.800" fill="#fff0cf" text-anchor="middle">
    <circle cx="49.500" cy="149" r="7.600" fill="url(#gDps2)"/><text x="49.600" y="151.500">DPS</text>
    <circle cx="276" cy="150" r="7.600" fill="url(#gDps2)"/><text x="276.100" y="152.500">DPS</text>
    <circle cx="375.500" cy="150" r="7.600" fill="url(#gDps2)"/><text x="375.600" y="152.500">DPS</text>
  </g>
  <g stroke="#707070" stroke-width="4" stroke-linecap="round"><path d="M236 147l7 6M243 147l-7 6"/><path d="M336 148l7 6M343 148l-7 6"/><path d="M472 148l7 6M479 148l-7 6"/></g>
  <g stroke="#fff" stroke-width="2.200" stroke-linecap="round"><path d="M236 147l7 6M243 147l-7 6"/><path d="M336 148l7 6M343 148l-7 6"/><path d="M472 148l7 6M479 148l-7 6"/></g>
</svg>
<div class="abs tabt" style="left:61px;top:143px;word-spacing:2.700px">视频教程 插入特殊形状文本框</div>
<div class="abs tabt" style="left:287px;top:143.500px">欢迎页</div>
<div class="abs tabt" style="left:386px;top:143.500px">新建文档<span style="display:inline-block;width:12px;text-align:center">:</span>书</div>

<div id="leftstrip">
  <div class="abs" style="left:1px;top:0;width:34px;height:53px;background:#fff;border-left:1px solid #c9c9c9;border-bottom:1px solid #c9c9c9"></div>
  <div class="sl" style="top:33px;color:#d2601a">图库</div>
  <div class="sl" style="top:85px;color:#7d7d7d">背景</div>
  <div class="sl" style="top:137px;color:#7d7d7d">边框</div>
  <div class="sl" style="top:189px;color:#7d7d7d">素材</div>
  <div class="sl" style="top:241px;color:#7d7d7d">版式</div>
  <div class="sl" style="top:293px;color:#7d7d7d">模板</div>
  <div class="sl" style="top:345px;color:#7d7d7d">形状</div>
  <div class="sl" style="top:397px;color:#7d7d7d">收藏</div>
  <div class="sl" style="top:449px;color:#2a9fd8">客服</div>
  <svg class="abs" style="left:0;top:0" width="36" height="537" viewBox="0 162 36 537">
    <!-- tuku -->
    <g transform="rotate(14 17 180)"><rect x="7" y="172.500" width="20" height="14.500" rx="2.500" fill="none" stroke="#d9601a" stroke-width="2.400"/>
    <path d="M10.500 184v-5l3 2.500 3-4 3 4 3.500-3v5.500z" fill="#d9601a"/></g>
    <path d="M6.500 176c0-4 3-6.500 7-6.500" fill="none" stroke="#d9601a" stroke-width="2.200"/>
    <path d="M12.500 166l5 3.500-5 3.500z" fill="#d9601a"/>
    <!-- beijing -->
    <rect x="6" y="222" width="22" height="17.500" fill="none" stroke="#7a7a7a" stroke-width="2"/>
    <path d="M7 233.500c6-1 7-4.500 11-5.500s6-0.500 9-1" fill="none" stroke="#7a7a7a" stroke-width="1.400"/>
    <!-- biankuang -->
    <rect x="6.500" y="272.500" width="21" height="22" fill="none" stroke="#7a7a7a" stroke-width="2.200" stroke-dasharray="2.200 0.400"/>
    <!-- sucai (tulip) -->
    <path d="M11 323l2.500 2 3.500-3.500 3.500 3.500 2.500-2c1 6-1 11-6 11s-7-5-6-11z" fill="#7a7a7a"/>
    <path d="M15.500 334h3v8h-3z" fill="#7a7a7a"/>
    <path d="M16 347c-6 1-11-3-11-9 5-1 10 2 11 9zM18 347c6 1 11-3 11-9-5-1-10 2-11 9z" fill="#7a7a7a"/>
    <!-- banshi -->
    <rect x="6" y="376" width="23" height="23" fill="none" stroke="#7a7a7a" stroke-width="2"/>
    <g fill="#7a7a7a"><rect x="9" y="379" width="5" height="5"/><rect x="15" y="379" width="5" height="5"/><rect x="21" y="379" width="5" height="5"/><rect x="9" y="385" width="5" height="5"/><rect x="15" y="385" width="5" height="5"/><rect x="21" y="385" width="5" height="5"/><rect x="9" y="391" width="5" height="5"/><rect x="15" y="391" width="5" height="5"/><rect x="21" y="391" width="5" height="5"/></g>
    <!-- muban -->
    <rect x="6" y="428" width="23" height="23" fill="none" stroke="#7a7a7a" stroke-width="2"/>
    <g fill="#7a7a7a"><rect x="9" y="431" width="17" height="4"/><rect x="9" y="437" width="8" height="11"/><rect x="19" y="437" width="7" height="2.500"/><rect x="19" y="441" width="7" height="2.500"/><rect x="19" y="445" width="7" height="2.500"/></g>
    <!-- xingzhuang -->
    <circle cx="17.500" cy="492" r="10.300" fill="#7a7a7a"/>
    <g fill="#7a7a7a"><circle cx="17.5" cy="482.4" r="3.200"/><circle cx="24.3" cy="485.2" r="3.200"/><circle cx="27.1" cy="492.0" r="3.200"/><circle cx="24.3" cy="498.8" r="3.200"/><circle cx="17.5" cy="501.6" r="3.200"/><circle cx="10.7" cy="498.8" r="3.200"/><circle cx="7.9" cy="492.0" r="3.200"/><circle cx="10.7" cy="485.2" r="3.200"/></g>
    <!-- shoucang -->
    <path d="M17.0 532.5L20.1 539.6L27.7 540.3L21.9 545.4L23.6 552.9L17.0 549.0L10.4 552.9L12.1 545.4L6.3 540.3L13.9 539.6z" fill="#7a7a7a" stroke="#7a7a7a" stroke-width="2" stroke-linejoin="round"/>
    <!-- kefu -->
    <path d="M19 603.500c1 3 5 2.500 6.500 1.500l3 2-0.700-3.500c2-2.500 1-6-1.800-7.500" fill="none" stroke="#2a9fd8" stroke-width="1.700" stroke-linejoin="round" stroke-linecap="round"/>
    <path d="M16 584c6 0 10.500 3.800 10.500 8.500S22 601 16 601c-1.500 0-3-0.300-4.300-0.700l-4.700 2.700 1.300-4.600c-1.800-1.500-2.800-3.600-2.800-5.900 0-4.700 4.500-8.500 10.500-8.500z" fill="#fff" stroke="#2a9fd8" stroke-width="1.700" stroke-linejoin="round"/>
    <g fill="#2a9fd8"><circle cx="11.500" cy="592.500" r="1.200"/><circle cx="16" cy="592.500" r="1.200"/><circle cx="20.500" cy="592.500" r="1.200"/></g>
  </svg>
</div>
<div id="panel">
  <div class="abs" style="left:29px;top:185px;width:177px;height:29px;background:#f3f3f3"></div>
  <div class="abs" style="left:26px;top:20px;width:0;height:0;border-left:5.500px solid #222;border-top:5.500px solid transparent;border-bottom:5.500px solid transparent;margin-top:-0.500px"></div>
  <div class="ni" style="top:15px;color:#5a5a5a;">开始</div>
  <div class="abs" style="left:26px;top:57px;width:0;height:0;border-left:5.500px solid #222;border-top:5.500px solid transparent;border-bottom:5.500px solid transparent;margin-top:-0.500px"></div>
  <div class="ni" style="top:52px;color:#4c5665;font-weight:bold;">如何编辑文字</div>
  <div class="ni" style="top:81px;color:#2e2e2e;">插入文字</div>
  <div class="ni" style="top:110px;color:#2e2e2e;">文字编辑详解</div>
  <div class="ni" style="top:139px;color:#2e2e2e;">输入文字、字体、字号、</div>
  <div class="ni" style="top:160px;color:#2e2e2e;">分栏</div>
  <div class="ni" style="top:189px;color:#2e2e2e;font-weight:bold;">插入特殊形状文本框</div>
  <div class="ni" style="top:218px;color:#2e2e2e;">文本框链接</div>
  <div class="ni" style="top:247px;color:#2e2e2e;">文字中插入图片与图形</div>
  <div class="ni" style="top:276px;color:#2e2e2e;">插入艺术字</div>
  <div class="ni" style="top:305px;color:#2e2e2e;">导入<span style="letter-spacing:1px">WORD</span>文档</div>
  <div class="ni" style="top:334px;color:#2e2e2e;">插入表格</div>
  <div class="abs" style="left:26px;top:376px;width:0;height:0;border-left:5.500px solid #222;border-top:5.500px solid transparent;border-bottom:5.500px solid transparent;margin-top:-0.500px"></div>
  <div class="ni" style="top:371px;color:#5a5a5a;">如何编辑图片</div>
  <div class="abs" style="left:26px;top:413px;width:0;height:0;border-left:5.500px solid #222;border-top:5.500px solid transparent;border-bottom:5.500px solid transparent;margin-top:-0.500px"></div>
  <div class="ni" style="top:408px;color:#5a5a5a;">插入图形</div>
  <div class="abs" style="left:26px;top:450px;width:0;height:0;border-left:5.500px solid #222;border-top:5.500px solid transparent;border-bottom:5.500px solid transparent;margin-top:-0.500px"></div>
  <div class="ni" style="top:445px;color:#5a5a5a;">插入素材</div>
  <div class="abs" style="left:26px;top:487px;width:0;height:0;border-left:5.500px solid #222;border-top:5.500px solid transparent;border-bottom:5.500px solid transparent;margin-top:-0.500px"></div>
  <div class="ni" style="top:482px;color:#5a5a5a;">插入页码</div>
  <div class="abs" style="left:26px;top:524px;width:0;height:0;border-left:5.500px solid #222;border-top:5.500px solid transparent;border-bottom:5.500px solid transparent;margin-top:-0.500px"></div>
  <div class="ni" style="top:519px;color:#5a5a5a;">模板使用</div>
</div>
<div id="video">
  <div id="vframe" class="abs" style="left:164px;top:0;width:750px;height:537px;overflow:hidden;background:#8d9ab1"><div class="abs" style="left:0;top:0;width:750px;height:537px;filter:blur(0.400px)">
<svg class="abs" style="left:0;top:0" width="750" height="537" viewBox="425 162 750 537">
<defs>
<linearGradient id="vRib" x1="0" y1="0" x2="0" y2="1"><stop offset="0" stop-color="#dfe9f6"/><stop offset="1" stop-color="#d5e2f2"/></linearGradient>
<linearGradient id="vTabA" x1="0" y1="0" x2="0" y2="1"><stop offset="0" stop-color="#f6ad42"/><stop offset="0.5" stop-color="#fcd182"/><stop offset="1" stop-color="#f9b950"/></linearGradient>
<linearGradient id="vTabI" x1="0" y1="0" x2="0" y2="1"><stop offset="0" stop-color="#bdd5f5"/><stop offset="1" stop-color="#8fb4e6"/></linearGradient>
<linearGradient id="vTit" x1="0" y1="0" x2="0" y2="1"><stop offset="0" stop-color="#86a2d0"/><stop offset="0.3" stop-color="#627cae"/><stop offset="1" stop-color="#7189b6"/></linearGradient>
</defs>
<rect x="425" y="162" width="750" height="16" fill="url(#vTit)"/>
<rect x="425" y="162" width="750" height="2" fill="#6f9fe0"/>
<text x="765" y="173" font-size="6.500" fill="#fff" font-family="Liberation Sans, Noto Sans CJK SC, sans-serif">DPS专业版 - [C:\课堂实操训练题.dpsf*]</text>
<rect x="1112.500" y="162.500" width="17" height="10" fill="#8aa0c8" stroke="#c0cde4" stroke-width="0.800"/><rect x="1130.500" y="162.500" width="15" height="10" fill="#8aa0c8" stroke="#c0cde4" stroke-width="0.800"/><rect x="1146.500" y="162.500" width="27" height="10" fill="#cc6a64" stroke="#e0b0b0" stroke-width="0.800"/>
<path d="M1118 168.500h6M1135.500 165.500h5v4.500h-5zM1157.500 164.500l4.500 5M1162 164.500l-4.500 5" stroke="#fff" stroke-width="1.200" fill="none"/>
<circle cx="452" cy="170" r="5" fill="#f0a030" opacity="0.7"/><rect x="470" y="166" width="6" height="8" fill="#fff" opacity="0.5"/><rect x="484" y="167" width="8" height="6" fill="#e8c050" opacity="0.6"/><rect x="498" y="166" width="7" height="8" fill="#aaa" opacity="0.5"/>
<rect x="425" y="178" width="750" height="13" fill="#dce6f5"/>
<rect x="425" y="178.500" width="42" height="12.500" fill="#a9bfe0"/>
<g font-size="7" fill="#334" font-family="Liberation Sans, Noto Sans CJK SC, sans-serif"><text x="436" y="187.500" fill="#fff">文件(F)</text><text x="478" y="187.500">设计(D)</text><text x="518" y="187.500">页面(G)</text><text x="558" y="187.500">视图(V)</text><text x="598" y="187.500">印刷(P)</text><text x="638" y="187.500">分享导出(S)</text><text x="690" y="187.500">帮助(H)</text><text x="1152" y="187.500" fill="#556">选项</text></g>
<circle cx="1143" cy="185" r="3.500" fill="#3b6cc4"/><path d="M1130 186.500l2.500-2.500 2.500 2.500" stroke="#667" fill="none"/>
<rect x="425" y="191" width="750" height="63" fill="url(#vRib)"/>
<rect x="1174" y="178" width="1" height="76" fill="#eef3fa"/>
<path d="M543.5 194v57" stroke="#b4c6de" stroke-width="1"/><path d="M544.5 194v57" stroke="#f0f5fb" stroke-width="1"/>
<path d="M640 194v57" stroke="#b4c6de" stroke-width="1"/><path d="M641 194v57" stroke="#f0f5fb" stroke-width="1"/>
<path d="M857 194v57" stroke="#b4c6de" stroke-width="1"/><path d="M858 194v57" stroke="#f0f5fb" stroke-width="1"/>
<path d="M882.5 194v57" stroke="#b4c6de" stroke-width="1"/><path d="M883.5 194v57" stroke="#f0f5fb" stroke-width="1"/>
<path d="M946.5 194v57" stroke="#b4c6de" stroke-width="1"/><path d="M947.5 194v57" stroke="#f0f5fb" stroke-width="1"/>
<path d="M1089.5 194v57" stroke="#b4c6de" stroke-width="1"/><path d="M1090.5 194v57" stroke="#f0f5fb" stroke-width="1"/>
<g transform="translate(0 3.500)">
<rect x="433.500" y="196" width="8" height="9" fill="#eef1f6" stroke="#8fa0b8" stroke-width="0.700"/><circle cx="444" cy="200" r="4.500" fill="#e3ebf6" stroke="#7b9acb" stroke-width="0.700"/><path d="M436.500 199v8c0 2 7 2 7 0v-8z" fill="#f4f7fb" stroke="#8fa0b8" stroke-width="0.700"/>
<rect x="455.500" y="196.500" width="15" height="13" fill="#fcfdff" stroke="#9aa8bd" stroke-width="0.700"/><text x="457" y="205" font-size="7" font-family="Liberation Serif, serif" fill="#223">A</text><path d="M463 200h6M463 202h6M457.500 206h12M457.500 207.800h12" stroke="#c3cad6" stroke-width="0.600"/>
<rect x="477.500" y="196.500" width="14" height="13" fill="#eaf2fb" stroke="#8aa0c0" stroke-width="0.700"/><path d="M478.500 208.500l4-5 3 3 2-2 3.500 4z" fill="#5a8ed0"/><circle cx="490" cy="207.500" r="2.600" fill="#3fae49"/>
<rect x="499.500" y="197" width="15" height="12.500" fill="#fbfbfb" stroke="#c3c8d0" stroke-width="0.700"/><path d="M500 201h14M500 204h14M500 207h14M504.500 201v8.500M509.500 201v8.500" stroke="#d5d8dd" stroke-width="0.600"/>
<rect x="523" y="196.500" width="6.500" height="6" fill="#e8edf5" stroke="#8796ad" stroke-width="0.600"/><rect x="531" y="196.500" width="6.500" height="6" fill="#e8edf5" stroke="#8796ad" stroke-width="0.600"/><rect x="523" y="204" width="6.500" height="6" fill="#58b05a" stroke="#3c8a44" stroke-width="0.600"/><rect x="531" y="204" width="6.500" height="6" fill="#7fa8e0" stroke="#4a78bc" stroke-width="0.600"/>
</g>
<g font-size="7.200" font-family="Liberation Sans, Noto Sans CJK SC, sans-serif" text-anchor="middle" fill="#3a4862"><text x="440" y="225.500">形状</text><text x="462.500" y="225.500">文本框</text><text x="484" y="225.500">图片</text><text x="507" y="225.500" fill="#9aa3b2">表格</text><text x="530" y="225.500">其他</text><text x="591" y="225.500">图片编辑</text><text x="621.500" y="225.500" fill="#9aa3b2">编辑形状</text><text x="898" y="225.500">艺术字</text><text x="960" y="225" fill="#7d8799">填充</text><text x="981" y="225" fill="#7d8799">边框</text><text x="1076" y="225" fill="#7d8799">阴影</text></g>
<g font-size="7.200" font-family="Liberation Sans, Noto Sans CJK SC, sans-serif" text-anchor="middle" fill="#8a96aa" font-size="7"><text x="485" y="248">插入</text><text x="591.500" y="248">编辑</text><text x="748.500" y="248">字体</text><text x="869.500" y="248">段落</text><text x="915" y="248">艺术字</text><text x="1018" y="248">样式</text><text x="1131.500" y="248">排列</text></g>
<g fill="#3a4558"><path d="M438.2 233.500h3.600l-1.800 2.200z"/><path d="M460.7 233.500h3.600l-1.800 2.200z"/><path d="M482.2 233.500h3.600l-1.800 2.200z"/><path d="M528.2 233.500h3.600l-1.800 2.200z"/><path d="M589.2 233.500h3.600l-1.800 2.200z"/><path d="M895.2 233.500h3.600l-1.800 2.200z"/><path d="M958.2 233.500h3.600l-1.800 2.200z"/><path d="M979.2 233.500h3.600l-1.800 2.200z"/><path d="M1074.2 233.500h3.600l-1.800 2.200z"/></g><path d="M619.700 233.500h3.600l-1.800 2.200z" fill="#a9b2c0"/>
<g>
<path d="M553 196l3 5M557 196l-3 5" stroke="#8a8f99" stroke-width="0.800"/><path d="M566 196c1-2 3-2 4 0l1 5h-6z" fill="#fff" stroke="#777" stroke-width="0.600"/>
<rect x="548.500" y="213" width="5" height="5.500" fill="#f2f4f8" stroke="#a2aab8" stroke-width="0.600"/><rect x="551.500" y="215" width="5" height="5.500" fill="#f7f8fb" stroke="#a2aab8" stroke-width="0.600"/>
<rect x="561.500" y="209.500" width="15" height="15" rx="1.500" fill="#fbcb62" stroke="#e0a030" stroke-width="0.900"/><path d="M566.500 212v8l2-1.800 1.500 3 1.200-0.500-1.400-3h2.700z" fill="#fff" stroke="#555" stroke-width="0.600"/>
<rect x="549" y="228" width="7" height="7" fill="#d9a93a" stroke="#8a6a20" stroke-width="0.600"/><rect x="552.500" y="231" width="5.500" height="4.500" fill="#f5f6f9" stroke="#8b93a3" stroke-width="0.600"/>
<path d="M565 227.500l7 8M572 227.500l-7 8" stroke="#8f98a8" stroke-width="1.400"/>
<path d="M584 212l8-13 8 13z" fill="#6aaa4a" stroke="#4b7d38" stroke-width="0.600"/><path d="M586 197l14 12" stroke="#e2b030" stroke-width="2.200"/>
<path d="M615 211l3-9 8-4-4 9z" fill="#d0d4db" stroke="#a9afba" stroke-width="0.700"/><path d="M626 196l-10 13" stroke="#b3b8c2" stroke-width="1.300"/>
</g>
<rect x="642.500" y="196" width="86" height="17.500" rx="1.500" fill="#f3efec" stroke="#b7c5da" stroke-width="0.800"/><rect x="730.500" y="196" width="29" height="17.500" rx="1.500" fill="#f3efec" stroke="#b7c5da" stroke-width="0.800"/>
<text x="646" y="208.500" font-size="7.500" fill="#6f7684" font-family="Liberation Sans, Noto Sans CJK SC, sans-serif">微软雅黑 Bold</text><text x="734" y="208.500" font-size="7.500" fill="#6f7684" font-family="Liberation Sans, Noto Sans CJK SC, sans-serif">三号</text>
<path d="M722 206h3.400l-1.700 2z M753.500 206h3.400l-1.700 2z" fill="#8e97a8"/>
<rect x="771.500" y="196" width="72" height="17.500" rx="1.500" fill="#eef3fa" stroke="#b7c5da" stroke-width="0.800"/>
<path d="M775 204.500h8M775 206.500h8M775 208.500h8M775 210.500h8" stroke="#59606e" stroke-width="0.900"/>
<path d="M786.20 197v16" stroke="#c6d2e4" stroke-width="0.700"/>
<path d="M789.40 204.500h8M789.40 206.500h8M789.40 208.500h8M789.40 210.500h8" stroke="#59606e" stroke-width="0.900"/>
<path d="M800.60 197v16" stroke="#c6d2e4" stroke-width="0.700"/>
<path d="M803.80 204.500h8M803.80 206.500h8M803.80 208.500h8M803.80 210.500h8" stroke="#59606e" stroke-width="0.900"/>
<path d="M815 197v16" stroke="#c6d2e4" stroke-width="0.700"/>
<path d="M818.20 204.500h8M818.20 206.500h8M818.20 208.500h8M818.20 210.500h8" stroke="#59606e" stroke-width="0.900"/>
<path d="M829.40 197v16" stroke="#c6d2e4" stroke-width="0.700"/>
<path d="M832.60 204.500h8M832.60 206.500h8M832.60 208.500h8M832.60 210.500h8" stroke="#59606e" stroke-width="0.900"/>
<rect x="642.500" y="218.500" width="126" height="15" rx="1.500" fill="#edf2f9" stroke="#b7c5da" stroke-width="0.800"/><rect x="771.500" y="218.500" width="83" height="15" rx="1.500" fill="#edf2f9" stroke="#b7c5da" stroke-width="0.800"/>
<path d="M656.7 219v14" stroke="#c6d2e4" stroke-width="0.700"/>
<path d="M671.3 219v14" stroke="#c6d2e4" stroke-width="0.700"/>
<path d="M686 219v14" stroke="#c6d2e4" stroke-width="0.700"/>
<path d="M700.5 219v14" stroke="#c6d2e4" stroke-width="0.700"/>
<path d="M715 219v14" stroke="#c6d2e4" stroke-width="0.700"/>
<path d="M729.5 219v14" stroke="#c6d2e4" stroke-width="0.700"/>
<path d="M750.5 219v14" stroke="#c6d2e4" stroke-width="0.700"/>
<path d="M789.5 219v14" stroke="#c6d2e4" stroke-width="0.700"/>
<path d="M804 219v14" stroke="#c6d2e4" stroke-width="0.700"/>
<path d="M825 219v14" stroke="#c6d2e4" stroke-width="0.700"/>
<path d="M839.5 219v14" stroke="#c6d2e4" stroke-width="0.700"/>
<g font-family="Liberation Serif, serif" fill="#3c4250" text-anchor="middle"><text x="649.500" y="229" font-size="8" font-weight="bold">B</text><text x="664" y="229" font-size="8" font-style="italic">I</text><text x="678.700" y="228.500" font-size="7.500" font-weight="bold">U</text><text x="693.300" y="228.500" font-size="6.500" fill="#777">abc</text><text x="737" y="229" font-size="9" fill="#8a8f9a">A</text><text x="778" y="225" font-size="5.500" fill="#667">AV</text></g>
<path d="M675.200 230h7" stroke="#3c4250" stroke-width="0.700"/><path d="M688.500 226h9.500" stroke="#777" stroke-width="0.600"/><path d="M705 223.500l4 4.500M709 223.500l-4 4.500M719.500 225l4 4.500M723.500 225l-4 4.500" stroke="#4a5060" stroke-width="0.900"/><text x="710" y="230" font-size="3.500" fill="#4a5060" font-family="Liberation Sans, sans-serif">2</text><text x="724.500" y="225" font-size="3.500" fill="#4a5060" font-family="Liberation Sans, sans-serif">2</text><rect x="732" y="230" width="10" height="1.600" fill="#556"/><rect x="752.500" y="221" width="9" height="10.500" fill="#fff" opacity="0.850"/><text x="757" y="229" font-size="9" fill="#8a8f9a" font-family="Liberation Serif, serif" text-anchor="middle">A</text>
<path d="M773.500 229h9M775 227.500l-1.500 1.500 1.500 1.500M781 227.500l1.500 1.500-1.500 1.500" stroke="#778" stroke-width="0.700" fill="none"/><path d="M794 221v10M792.800 222.500l1.200-1.500 1.200 1.500M792.800 229.500l1.200 1.500 1.200-1.500" stroke="#778" stroke-width="0.700" fill="none"/><path d="M797 223h5M797 226h5M797 229h5" stroke="#556" stroke-width="0.900"/><rect x="807.500" y="223.500" width="9" height="5.500" fill="#7b8392"/><rect x="828" y="222" width="9" height="8" fill="#f4f6fa" stroke="#9aa3b3" stroke-width="0.600"/><rect x="842.500" y="222" width="9" height="8" fill="#f4f6fa" stroke="#9aa3b3" stroke-width="0.600"/>
<g fill="#a5adbb"><path d="M744.500 225.500h3l-1.500 1.800zM764.500 225.500h3l-1.500 1.800zM785 225.500h3l-1.500 1.800zM820 225.500h3l-1.500 1.800z"/></g>
<rect x="864" y="198" width="8" height="7" fill="#f3f5f9" stroke="#8d96a6" stroke-width="0.600"/><g fill="none" stroke="#9aa2b0" stroke-width="0.800"><rect x="863" y="215.500" width="4.500" height="3" rx="1.500"/><rect x="866.500" y="215.500" width="4.500" height="3" rx="1.500"/><circle cx="867" cy="231" r="3" stroke-dasharray="1 0.700"/></g>
<text x="898" y="213" font-size="17" font-weight="bold" font-style="italic" text-anchor="middle" fill="#3f78c8" stroke="#2a569c" stroke-width="0.300" font-family="Liberation Serif, serif">A</text>
<g font-size="7.500" font-family="Liberation Sans, Noto Sans CJK SC, sans-serif" fill="#8a95a8"><text x="922" y="204">形状</text><text x="922" y="219">变形</text><text x="922" y="234">竖排</text><text x="1005" y="204">线型</text><text x="1005" y="219">箭尾</text><text x="1005" y="234">箭头</text><text x="1041" y="204">粗细</text><text x="1041" y="219">透明度</text><text x="1041" y="234">样式刷</text><text x="1107" y="204">上一层</text><text x="1107" y="219">下一层</text><text x="1107" y="234">锁定</text><text x="1150" y="204">对齐</text><text x="1150" y="219">编组</text><text x="1150" y="234">旋转</text></g>
<g fill="#9ea7b6" font-family="Liberation Sans, sans-serif" font-weight="bold" font-size="8"><text x="913" y="204">A</text><text x="913" y="219">A</text><text x="913" y="234">b</text></g>
<g fill="#b0b8c5"><path d="M940 215.500h3l-1.500 1.800zM1022 215.500h3l-1.500 1.800zM1022 230.500h3l-1.500 1.800zM1129 215.500h3l-1.500 1.800zM1167 215.500h3l-1.500 1.800zM1167 230.500h3l-1.500 1.800z"/></g>
<path d="M953 205l7-8 7 6-5 7z" fill="#e9ecf2" stroke="#667" stroke-width="0.700"/><rect x="951" y="211" width="18" height="2.200" fill="#333"/><path d="M973.500 197.500h12l-9 12h-3z" fill="#f5f7fa" stroke="#99a" stroke-width="0.700"/><path d="M976 210l10-12" stroke="#889" stroke-width="1.200"/>
<g stroke="#6f7888" stroke-width="0.800"><path d="M994 214h9M994 217h9M994 220h9M994 229h9M994 232h9M994 199h9M994 202h9"/></g><rect x="1030" y="212" width="8" height="7" fill="#dfe3ea" stroke="#8a93a3" stroke-width="0.600"/><path d="M1031 236l6-8 2 1.500-6 8z" fill="#cfd4dc" stroke="#7d8696" stroke-width="0.500"/><path d="M1030 199h9M1030 201.500h9" stroke="#7d8696" stroke-width="1"/>
<rect x="1067.500" y="193" width="17" height="20" rx="2.500" fill="#f4f5f7" stroke="#c3c8d0" stroke-width="0.800"/><path d="M1069 214.500h15c1.500 0 2.500-1 2.500-2.500v-14" fill="none" stroke="#b8bec8" stroke-width="0.900"/>
<g stroke="#9aa3b3" stroke-width="0.600" fill="#e6e9ef"><rect x="1095" y="197" width="5" height="5"/><rect x="1098" y="200" width="5" height="5" fill="#cfd4dc"/><rect x="1098" y="215" width="5" height="5"/><rect x="1095" y="212" width="5" height="5" fill="#cfd4dc"/><rect x="1095.500" y="227.500" width="7" height="8"/></g>
<path d="M1139.500 196v9" stroke="#445" stroke-width="1.100"/><rect x="1141.500" y="197.500" width="5" height="2.500" fill="#eef" stroke="#889" stroke-width="0.500"/><g fill="none" stroke="#556" stroke-width="0.800"><rect x="1139.500" y="213.500" width="5" height="4.500"/><rect x="1142" y="215.500" width="5" height="4.500"/></g><g fill="#223"><rect x="1138" y="212" width="1.600" height="1.600"/><rect x="1146.500" y="212" width="1.600" height="1.600"/><rect x="1138" y="220" width="1.600" height="1.600"/><rect x="1146.500" y="220" width="1.600" height="1.600"/></g><path d="M1142.500 235v-6l-4 6z" fill="#d5d9e0" stroke="#99a" stroke-width="0.500"/><path d="M1144 235v-7l4 7z" fill="#8a93a3"/>
<rect x="425" y="254" width="750" height="14.500" fill="#86a8d8"/>
<rect x="425" y="254" width="21" height="14.500" fill="#ececec"/><path d="M432 257.500v8" stroke="#a6a6a6" stroke-width="1.300"/><path d="M434.500 257.500l4.500 4-4.500 4z" fill="#a6a6a6"/>
<path d="M446.500 268.500v-12c0-1.500 1-2 2-2h80c3 0 4.500 2.500 6 6l4 8z" fill="url(#vTabI)" stroke="#6f95cc" stroke-width="0.700"/>
<path d="M534 268.500l2.500-12c0.300-1.500 1-2 2-2h96c3 0 4.500 2.500 6 6l5 8z" fill="url(#vTabA)" stroke="#e09a2c" stroke-width="0.700"/>
<circle cx="454.500" cy="261.500" r="4.800" fill="#3c9fe0"/><circle cx="544.500" cy="261.500" r="4.800" fill="#3c9fe0"/>
<g font-size="7" font-family="Liberation Sans, Noto Sans CJK SC, sans-serif" fill="#111"><text x="461" y="264">欢迎使用DPS软件</text><text x="551" y="264">课堂实操训练题.dpsf*</text></g>
<g stroke="#666" stroke-width="0.700" fill="#f4f4f4"><rect x="520.500" y="258.500" width="6.500" height="5.500" rx="1"/><rect x="626" y="258.500" width="6.500" height="5.500" rx="1"/></g><path d="M522.500 260l2.500 2.500M525 260l-2.500 2.500M628 260l2.500 2.500M630.500 260l-2.500 2.500" stroke="#555" stroke-width="0.600"/>
<rect x="446" y="268.500" width="718" height="10.500" fill="#fdfdfd"/>
<rect x="446" y="278" width="718" height="1" fill="#333"/>
<path d="M459.05 276v2.500M473.08 276v2.500M487.11 276v2.500M501.14 276v2.500M515.17 276v2.500M529.20 269v9.500M543.23 276v2.500M557.26 276v2.500M571.29 276v2.500M585.32 276v2.500M599.35 276v2.500M613.38 276v2.500M627.41 276v2.500M641.44 276v2.500M655.47 276v2.500M669.50 269v9.500M683.53 276v2.500M697.56 276v2.500M711.59 276v2.500M725.62 276v2.500M739.65 276v2.500M753.68 276v2.500M767.71 276v2.500M781.74 276v2.500M795.77 276v2.500M809.80 269v9.500M823.83 276v2.500M837.86 276v2.500M851.89 276v2.500M865.92 276v2.500M879.95 276v2.500M893.98 276v2.500M908.01 276v2.500M922.04 276v2.500M936.07 276v2.500M950.10 269v9.500M964.13 276v2.500M978.16 276v2.500M992.19 276v2.500M1006.22 276v2.500M1020.25 276v2.500M1034.28 276v2.500M1048.31 276v2.500M1062.34 276v2.500M1076.37 276v2.500M1090.40 269v9.500M1104.43 276v2.500M1118.46 276v2.500M1132.49 276v2.500M1146.52 276v2.500M1160.55 276v2.500" stroke="#222" stroke-width="0.900"/>
<g font-size="6" font-family="Liberation Sans, sans-serif" fill="#222"><text x="531" y="275">-200</text><text x="671.500" y="275">-100</text><text x="812" y="275">0</text><text x="952" y="275">100</text><text x="1092.500" y="275">200</text></g>
<path d="M954.500 268.500v10" stroke="#e0203a" stroke-width="1.300"/><rect x="953" y="268.500" width="3" height="3" fill="#e0203a"/>
<rect x="446" y="268.500" width="9.500" height="10.500" fill="#fdfdfd" stroke="#555" stroke-width="0.600"/><path d="M448 274h5M450.500 271.500v5" stroke="#333" stroke-width="0.700"/>
<rect x="425" y="268.500" width="21" height="431" fill="#f1f1ee"/><rect x="445.500" y="268.500" width="0.800" height="431" fill="#b9b9b9"/>
<rect x="425.500" y="268.500" width="20" height="29.500" fill="#fdfdfd"/><path d="M425 298h20.500" stroke="#c4c4c4" stroke-width="0.700"/>
<rect x="446.300" y="279" width="9.200" height="420" fill="#fdfdfd"/>
<path d="M452.500 282.47h3M447 296.50h8.500M452.500 310.53h3M452.500 324.56h3M452.500 338.59h3M452.500 352.62h3M452.500 366.65h3M452.500 380.68h3M452.500 394.71h3M452.500 408.74h3M452.500 422.77h3M447 436.80h8.500M452.500 450.83h3M452.500 464.86h3M452.500 478.89h3M452.500 492.92h3M452.500 506.95h3M452.500 520.98h3M452.500 535.01h3M452.500 549.04h3M452.500 563.07h3M447 577.10h8.500M452.500 591.13h3M452.500 605.16h3M452.500 619.19h3M452.500 633.22h3M452.500 647.25h3M452.500 661.28h3M452.500 675.31h3M452.500 689.34h3" stroke="#222" stroke-width="0.900"/>
<g font-size="5.500" font-family="Liberation Sans, sans-serif" fill="#222"><text transform="translate(452 304) rotate(-90)" x="0" y="0">0</text><text transform="translate(452 446) rotate(-90)">100</text><text transform="translate(452 586) rotate(-90)">200</text></g>
<path d="M446.500 486.500h5" stroke="#d01030" stroke-width="1.200"/>
<rect x="455.500" y="279" width="709" height="420" fill="#8d9ab1"/>
<rect x="511" y="279" width="600" height="3.500" fill="#f4f4f2"/><rect x="511" y="282.500" width="600" height="1.200" fill="#77829a"/>
<text x="660.500" y="289.500" font-size="6" font-weight="bold" fill="#222" font-family="Liberation Sans, sans-serif">6</text><text x="955" y="289.500" font-size="6" font-weight="bold" fill="#222" font-family="Liberation Sans, sans-serif">7</text>
<rect x="511" y="292.700" width="599.500" height="407" fill="#fdfefa"/>
<path d="M810 697H515.500V296.500H810" fill="none" stroke="#555" stroke-width="0.800"/><path d="M811 697H1106.500" fill="none" stroke="#999" stroke-width="0.800"/>
<path d="M810.500 699V293.200H1109.600" fill="none" stroke="#c0404a" stroke-width="1.200"/><path d="M1109.800 292.600V699" fill="none" stroke="#b5565a" stroke-width="2.200"/>
<path d="M811 296.500H1106.500V699" fill="none" stroke="#b0b0b0" stroke-width="0.700"/>
<rect x="808" y="452" width="5" height="5" fill="#fdfefa"/><rect x="808" y="490" width="5" height="5" fill="#fdfefa"/>
<rect x="543.500" y="325" width="239" height="344" fill="none" stroke="#9a9a9a" stroke-width="0.700" stroke-dasharray="1 1.500"/>
<rect x="838.500" y="325" width="238.500" height="344" fill="none" stroke="#9a9a9a" stroke-width="0.700" stroke-dasharray="1 1.500"/>
<rect x="548.500" y="479.500" width="89" height="56" rx="4" fill="none" stroke="#444" stroke-width="0.900"/>
<ellipse cx="718.900" cy="497.400" rx="54.600" ry="31.800" fill="none" stroke="#444" stroke-width="0.900"/>
<ellipse cx="697.800" cy="541.400" rx="17.100" ry="9.900" fill="none" stroke="#444" stroke-width="0.900"/>
<ellipse cx="681.700" cy="560.500" rx="8.600" ry="5.100" fill="none" stroke="#444" stroke-width="0.900"/>
<path d="M685.80 577.30C680.67 577.15 678.23 578.05 671.40 578.90C664.57 579.75 654.02 580.78 644.80 582.40C635.58 584.02 623.97 585.87 616.10 588.60C608.23 591.33 603 595.15 597.60 598.80C592.20 602.45 587.05 608.45 583.70 610.50C580.35 612.55 579.28 609.47 577.50 611.10C575.72 612.73 574.43 615 573 620.30C571.57 625.60 569.23 636.40 568.90 642.90C568.57 649.40 568.60 654.87 571 659.30C573.40 663.73 578.52 666.60 583.30 669.50C588.08 672.40 594.23 674.72 599.70 676.70C605.17 678.68 609.95 680.72 616.10 681.40C622.25 682.08 627.72 681.58 636.60 680.80C645.48 680.02 659.15 678.23 669.40 676.70C679.65 675.17 689.90 673.48 698.10 671.60C706.30 669.72 712.97 667.62 718.60 665.40C724.23 663.18 728.48 661.03 731.90 658.30C735.32 655.57 737.47 651.92 739.10 649C740.73 646.08 741.37 644.55 741.70 640.80C742.03 637.05 741.88 631.97 741.10 626.50C740.32 621.03 738.70 613.13 737 608C735.30 602.87 733.97 599.28 730.90 595.70C727.83 592.12 723.38 589.15 718.60 586.50C713.82 583.85 707.67 581.33 702.20 579.80C696.73 578.27 690.93 577.45 685.80 577.30z" fill="none" stroke="#444" stroke-width="0.900"/>
<g font-size="10" font-family="Liberation Sans, Noto Sans CJK SC, sans-serif" font-weight="300" fill="#6a6a6a" text-anchor="middle"><text x="593" y="510.300">请双击输入文字</text><text x="718.800" y="518.500">请双击输入文字</text><text x="655" y="632.700">请双击输入文字</text></g>
<g font-family="Liberation Serif, Noto Serif CJK SC, serif" font-weight="bold" fill="#222"><text x="544" y="322" font-size="7.800">字块旋转</text><text x="549.500" y="468" font-size="7.300">任意文本框。</text></g>
<circle cx="953.500" cy="485" r="2.500" fill="#f2e23a"/><path d="M954.500 486v9.500l2.200-2 1.500 3.300 1.300-0.600-1.500-3.200h3z" fill="#fff" stroke="#222" stroke-width="0.700" stroke-linejoin="round"/>
<rect x="1164.300" y="268.500" width="10.700" height="431" fill="#eceef1"/><path d="M1166.500 276l3-3.500 3 3.500z" fill="#555"/><rect x="1165.500" y="413" width="8.500" height="26" rx="1.500" fill="#dfe2e7" stroke="#8d939c" stroke-width="0.700"/><path d="M1167.500 424.500h4.500M1167.500 426.500h4.500M1167.500 428.500h4.500" stroke="#666" stroke-width="0.700"/>
<rect x="1090" y="677.500" width="85" height="17" fill="#fdfdfd"/><circle cx="1085" cy="684.500" r="10.200" fill="#2d7fe0"/><text x="1085" y="688.500" font-size="11.500" font-style="italic" fill="#fff" text-anchor="middle" font-family="Liberation Sans, sans-serif" letter-spacing="-0.500">du</text>
<g fill="#2d7fe0" stroke="none"><text x="1105" y="689.500" font-size="10" font-weight="bold" text-anchor="middle" font-family="Noto Sans CJK SC, sans-serif">中</text><circle cx="1118" cy="683.500" r="1.400" fill="none" stroke="#2d7fe0" stroke-width="1"/><path d="M1123.300 686.500c0.800 1.300 0.300 2.600-0.900 3.500" stroke="#2d7fe0" stroke-width="1.400" fill="none"/><path d="M1131.700 682.300h7.500v5.500h-7.500zM1139.200 682.300h1.800l-1 2.500" fill="none" stroke="#2d7fe0" stroke-width="1.200"/><path d="M1130.500 690h9.500" stroke="#2d7fe0" stroke-width="1.600"/><circle cx="1151" cy="683" r="2.300" fill="none" stroke="#c5d0e2" stroke-width="1"/><path d="M1147 690.500c0.500-4 1.500-4.500 4-4.500s3.500 0.500 4 4.500z" fill="none" stroke="#c5d0e2" stroke-width="1"/></g>
<g fill="none" stroke="#2d7fe0" stroke-width="1.300"><rect x="1162.200" y="681.200" width="3" height="3"/><rect x="1167.600" y="681.200" width="3" height="3"/><rect x="1162.200" y="686.600" width="3" height="3"/><rect x="1167.600" y="686.600" width="3" height="3"/></g>
</svg>
<svg class="abs" style="left:0;top:106.500px" width="21" height="431" viewBox="425.700 268.500 21 431">
<g transform="rotate(14 435 279)"><rect x="429.500" y="274.500" width="11.500" height="8.500" rx="1.500" fill="none" stroke="#d9601a" stroke-width="1.500"/><path d="M431.500 281.500v-3l2 1.500 1.500-2.500 2 2.500 2-2v3.500z" fill="#d9601a"/></g><path d="M429 276.500c0-2.500 2-4 4-4" fill="none" stroke="#d9601a" stroke-width="1.300"/><path d="M432.500 270.500l3 2-3 2z" fill="#d9601a"/>
<rect x="429" y="303.500" width="13" height="10.500" fill="none" stroke="#777" stroke-width="1.200"/><path d="M429.500 310.500c4-0.500 4-3 7-3.500s3.500-0.300 5.500-0.600" fill="none" stroke="#777" stroke-width="0.800"/>
<rect x="429" y="333" width="13" height="13" fill="none" stroke="#777" stroke-width="1.300"/>
<path d="M431.500 362.500l1.500 1.200 2-2 2 2 1.500-1.200c0.600 3.500-0.600 6.500-3.500 6.500s-4.100-3-3.500-6.500zM434.200 369h1.600v3.500h-1.600zM434.500 376c-3.500 0.600-6.500-1.800-6.500-5 3-0.600 6 1 6.500 5zM435.500 376c3.500 0.600 6.500-1.800 6.500-5-3-0.600-6 1-6.500 5z" fill="#777"/>
<rect x="429" y="394" width="13" height="13" fill="none" stroke="#777" stroke-width="1.200"/><path d="M430 398.500h11M430 402.500h11M433.500 395v11M437.500 395v11" stroke="#777" stroke-width="0.900"/>
<rect x="429" y="424.500" width="13" height="13" fill="none" stroke="#777" stroke-width="1.200"/><rect x="431" y="426.500" width="9" height="2.500" fill="#777"/><rect x="431" y="430.500" width="4" height="5" fill="#777"/><path d="M436.500 431h3.500M436.500 433h3.500M436.500 435h3.500" stroke="#777" stroke-width="0.900"/>
<circle cx="435.500" cy="461.500" r="6.700" fill="#777"/>
<path d="M435.500 484.500l2.100 4.800 5.100 0.500-3.900 3.500 1.200 5.100-4.500-2.700-4.500 2.700 1.200-5.100-3.900-3.500 5.100-0.500z" fill="#777"/>
<g font-size="6.500" font-family="Liberation Sans, Noto Sans CJK SC, sans-serif" text-anchor="middle" fill="#777"><text x="435.300" y="294" fill="#d9601a">图库</text><text x="435.300" y="324">背景</text><text x="435.300" y="355">边框</text><text x="435.300" y="385.500">素材</text><text x="435.300" y="416">版式</text><text x="435.300" y="446.500">模板</text><text x="435.300" y="477">形状</text><text x="435.300" y="507.500">收藏</text></g>
</svg>
    <div class="pt" style="left:413px;top:199.500px;width:114.500px;line-height:14.850px"><span class="l">插入文本框，<b style="letter-spacing:3.5px">在框里插入</b></span><span class="l"><b style="letter-spacing:4px">文字：</b><small>打字与拷贝贴入，</small>设置字</span><span class="l">体、大小、颜色，设置字距、行</span><span class="l">距，分栏，字块旋转，各类为本</span><span class="l" style="text-align-last:left;text-align:left">框，任意文本框，插入文本框，</span></div>
    <div class="pt" style="left:538.500px;top:199.500px;width:113.500px;line-height:14.850px"><span class="l">在框里插入文字：打字与拷贝贴</span><span class="l">入，设置字体、大小、颜色，设</span><span class="l">置字距、行距，分栏，字块旋</span><span class="l" style="text-align-last:left;text-align:left">转，各类为本框，任意文本框。</span></div>
    <div class="abs" style="left:126.500px;top:181.300px;width:240px;height:69px;transform-origin:0 0;transform:rotate(11.070deg);border-right:1.500px solid #666;border-bottom:1.500px solid #666;border-top:0.500px solid #ccc;border-left:0.500px solid #ccc">
      <div class="pt" style="left:1px;top:1.500px;width:113px;line-height:13.100px"><span class="l">插入文本框，<b style="letter-spacing:3.5px">在框里插入</b></span><span class="l"><b style="letter-spacing:4px">文字</b>：打字与拷贝贴入，设置</span><span class="l">字体、大小、颜色，设置字距、</span><span class="l">行距，分栏，字块旋转，各类为</span><span class="l">本框，任意文本框，插入文本</span></div>
      <div class="pt" style="left:123px;top:1.500px;width:115px;line-height:13.100px"><span class="l">框，在框里插入文字：打字与拷</span><span class="l">贝贴入，设置字体、大小、颜</span><span class="l">色，设置字距，行距，分栏，字</span><span class="l">块旋转，各类为本框，任意文本</span><span class="l" style="text-align-last:left;text-align:left">框。</span></div>
    </div>
  </div></div>
  <div id="vhead">
    <div id="vh1">插入特殊形状文本框</div>
    <div id="vh2">温馨提示：如果视频无法播放，显示加载错误，请<b>【点击这里使用浏览器观看】</b>。</div>
  </div>
</div>
<div id="vscroll">
  <svg class="abs" style="left:0;top:0" width="16" height="537" viewBox="1350 162 16 537">
    <defs><linearGradient id="gThumb" x1="0" y1="0" x2="1" y2="0"><stop offset="0" stop-color="#f7f7f7"/><stop offset="0.5" stop-color="#ececec"/><stop offset="1" stop-color="#d2d2d2"/></linearGradient></defs>
    <path d="M1353 173.500l4.500-5 4.500 5z" fill="#4a4a4a"/>
    <rect x="1350.500" y="179.500" width="14" height="372" rx="2" fill="url(#gThumb)" stroke="#9c9c9c"/>
    <path d="M1354 362.500h7.500M1354 364.500h7.500M1354 366.500h7.500M1354 368.500h7.500" stroke="#858585" stroke-width="1"/>
    <path d="M1353 687.500l4.500 5 4.500-5z" fill="#4a4a4a"/>
  </svg>
</div>
<div id="status">
  <div class="abs" style="left:0;top:0;width:1366px;height:1px;background:#f4f8fd"></div>
  <div class="abs" style="left:361px;top:2px;width:2px;height:24px;border-left:1px solid #9fb2cf;border-right:1px solid #e6eef9"></div>
  <div class="abs" style="left:646px;top:4px;width:100px;height:20px;background:#ececec;border:1px solid #d9dde3"></div>
  <div class="stx" style="left:756px">X:-</div>
  <div class="stx" style="left:810px">Y:-</div>
  <div class="stx" style="left:1211px;font-weight:normal;letter-spacing:-0.5px;font-family:'Liberation Sans',sans-serif;font-size:11px">33%</div>
  <svg class="abs" style="left:0;top:-1px" width="1366" height="28" viewBox="0 699 1366 28">
    <defs><linearGradient id="gBtn" x1="0" y1="0" x2="0" y2="1"><stop offset="0" stop-color="#fbfcfe"/><stop offset="1" stop-color="#dfe5ee"/></linearGradient></defs>
    <g fill="url(#gBtn)" stroke="#a9b4c4">
      <rect x="905.500" y="703.500" width="25.500" height="21" rx="2"/><rect x="934.500" y="703.500" width="25.500" height="21" rx="2"/>
      <rect x="962.500" y="703.500" width="96.500" height="21" rx="2" fill="#eceef2"/>
      <rect x="1062.500" y="703.500" width="25.500" height="21" rx="2"/><rect x="1091.500" y="703.500" width="25.500" height="21" rx="2"/>
      <rect x="1138.500" y="705.500" width="56" height="18" rx="2" fill="#e4e4e4" stroke="#9a9a9a"/>
    </g>
    <g fill="#6f6f6f"><rect x="910.500" y="708.500" width="2.500" height="11"/><path d="M913 714l7-5.500v3.500h6.500v4h-6.500v3.500z"/>
      <path d="M939.500 714l7-5.500v3.500h7.500v4h-7.500v3.500z"/>
      <path d="M1084 714l-7-5.500v3.500h-8.500v4h8.500v3.500z"/>
      <path d="M1109.500 714l-7-5.500v3.500h-7v4h7v3.500z"/><rect x="1109.500" y="708.500" width="2.500" height="11"/></g>
    <path d="M1048.500 711.500h5l-2.500 3z" fill="#b3bbc8"/>
    <path d="M1157.500 706v17M1176.500 706v17" stroke="#aaa"/>
    <circle cx="1144.500" cy="716" r="3.800" fill="#eee" stroke="#8a8a8a"/><path d="M1147 719l3 3.500" stroke="#8a8a8a" stroke-width="1.800"/><rect x="1146.500" y="706.500" width="10" height="8" fill="#fafafa" stroke="#999" stroke-width="0.700"/><text x="1151.500" y="713" font-size="5.500" text-anchor="middle" fill="#444" font-family="Liberation Sans, sans-serif">100</text>
    <rect x="1160.500" y="708.500" width="13" height="12" fill="#fafafa" stroke="#888" stroke-width="0.800"/><path d="M1162 711.500h10M1162 713.500h10M1162 715.500h10M1162 717.500h10" stroke="#777" stroke-width="0.800"/>
    <rect x="1180.500" y="708.500" width="10" height="12" fill="#fafafa" stroke="#888" stroke-width="0.800"/><rect x="1183" y="710.500" width="5" height="8" fill="none" stroke="#999" stroke-width="0.700"/><path d="M1184 712.500h3M1184 714.500h3M1184 716.500h3" stroke="#999" stroke-width="0.600"/>
    <circle cx="1243.600" cy="714.300" r="7.700" fill="#eef1f6" stroke="#777" stroke-width="1.200"/><path d="M1239.500 714.300h8.200" stroke="#555" stroke-width="2"/>
    <circle cx="1355.500" cy="714.300" r="7.700" fill="#eef1f6" stroke="#777" stroke-width="1.200"/><path d="M1351.400 714.300h8.200M1355.500 710.200v8.200" stroke="#555" stroke-width="2"/>
    <path d="M1257.500 713.500h85" stroke="#8f9aae" stroke-width="1"/><path d="M1257.500 714.500h85" stroke="#e9eff8" stroke-width="1"/><path d="M1298.500 710.500v7" stroke="#8f9aae" stroke-width="1"/>
    <path d="M1267.500 707.500h8v8.500l-4 4.500-4-4.500z" fill="#e9edf3" stroke="#5e6c84" stroke-width="1"/>
  </svg>
</div>
</body>
</html>
